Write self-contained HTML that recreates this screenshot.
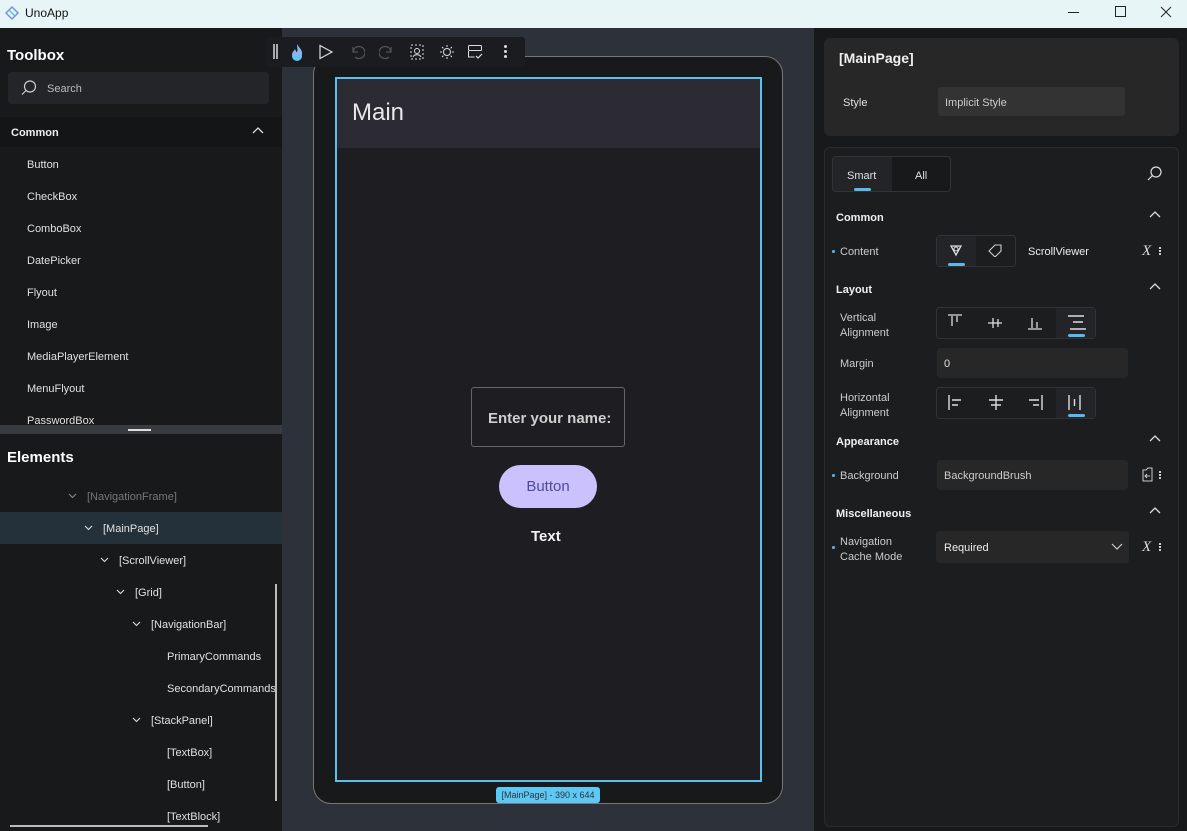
<!DOCTYPE html>
<html><head><meta charset="utf-8"><style>
*{box-sizing:border-box;margin:0;padding:0}
body{width:1187px;height:831px;overflow:hidden;background:#18191b;font-family:"Liberation Sans","DejaVu Sans",sans-serif;color:#e6e6e6;position:relative}
.a{position:absolute}
.t{font-size:11px;color:#e0e0e0;margin-top:1px}
.h{font-weight:bold;font-size:12px;color:#f0f0f0;margin-top:1px}
svg{position:absolute}
.cv{position:absolute;width:9px;height:6px}
</style></head><body>
<!-- title bar -->
<div class="a" style="left:0;top:0;width:1187px;height:28px;background:#e8f5f7"></div>
<svg style="left:3px;top:4px" width="18" height="18" viewBox="0 0 18 18"><path d="M3 9l6-6 6 6-6 6z" fill="none" stroke="#7b8fe0" stroke-width="1.5"/><path d="M6 6l6 6" stroke="#5cc0ee" stroke-width="1.5"/></svg>
<div class="a" style="left:25px;top:6px;font-size:12px;color:#111">UnoApp</div>
<div class="a" style="left:1068px;top:12px;width:11px;height:1px;background:#222"></div>
<div class="a" style="left:1115px;top:6px;width:11px;height:11px;border:1px solid #222"></div>
<svg style="left:1160px;top:6px" width="12" height="12"><path d="M1 1l10 10M11 1L1 11" stroke="#222" stroke-width="1"/></svg>

<!-- left panel -->
<div class="a" style="left:0;top:28px;width:282px;height:803px;background:#18191b"></div>
<div class="a" style="left:7px;top:47px;font-size:15px;font-weight:bold;color:#fff">Toolbox</div>
<div class="a" style="left:8px;top:72px;width:261px;height:32px;background:#242528;border-radius:4px"></div>
<svg style="left:20px;top:79px" width="18" height="18" viewBox="0 0 18 18"><circle cx="10" cy="7.5" r="5.5" fill="none" stroke="#ccc" stroke-width="1.2"/><path d="M6 11.5L2 15.5" stroke="#ccc" stroke-width="1.2"/></svg>
<div class="a t" style="left:47px;top:82px;color:#bbb">Search</div>
<div class="a" style="left:0;top:117px;width:282px;height:30px;background:#141517"></div>
<div class="a h" style="left:11px;top:126px;font-size:11px">Common</div>
<svg style="left:252px;top:126px" width="12" height="10"><path d="M1 7l5-5 5 5" fill="none" stroke="#ddd" stroke-width="1.3"/></svg>
<div class="a t" style="left:27px;top:158px">Button</div>
<div class="a t" style="left:27px;top:190px">CheckBox</div>
<div class="a t" style="left:27px;top:222px">ComboBox</div>
<div class="a t" style="left:27px;top:254px">DatePicker</div>
<div class="a t" style="left:27px;top:286px">Flyout</div>
<div class="a t" style="left:27px;top:318px">Image</div>
<div class="a t" style="left:27px;top:350px">MediaPlayerElement</div>
<div class="a t" style="left:27px;top:382px">MenuFlyout</div>
<div class="a t" style="left:27px;top:414px">PasswordBox</div>
<div class="a" style="left:0;top:425px;width:282px;height:9px;background:#383c40"></div>
<div class="a" style="left:128px;top:429px;width:23px;height:2px;background:#ddd"></div>
<div class="a" style="left:7px;top:449px;font-size:15px;font-weight:bold;color:#fff">Elements</div>
<div class="a" style="left:0;top:512px;width:282px;height:32px;background:#25313a"></div>
<svg class="cv" style="left:68px;top:493px" viewBox="0 0 9 6"><path d="M1 1l3.5 3.5L8 1" fill="none" stroke="#888" stroke-width="1.1"/></svg>
<div class="a t" style="left:87px;top:490px;color:#777">[NavigationFrame]</div>
<svg class="cv" style="left:84px;top:525px" viewBox="0 0 9 6"><path d="M1 1l3.5 3.5L8 1" fill="none" stroke="#ddd" stroke-width="1.1"/></svg>
<div class="a t" style="left:103px;top:522px">[MainPage]</div>
<svg class="cv" style="left:100px;top:557px" viewBox="0 0 9 6"><path d="M1 1l3.5 3.5L8 1" fill="none" stroke="#ddd" stroke-width="1.1"/></svg>
<div class="a t" style="left:119px;top:554px">[ScrollViewer]</div>
<svg class="cv" style="left:116px;top:589px" viewBox="0 0 9 6"><path d="M1 1l3.5 3.5L8 1" fill="none" stroke="#ddd" stroke-width="1.1"/></svg>
<div class="a t" style="left:135px;top:586px">[Grid]</div>
<svg class="cv" style="left:132px;top:621px" viewBox="0 0 9 6"><path d="M1 1l3.5 3.5L8 1" fill="none" stroke="#ddd" stroke-width="1.1"/></svg>
<div class="a t" style="left:151px;top:618px">[NavigationBar]</div>
<div class="a t" style="left:167px;top:650px">PrimaryCommands</div>
<div class="a t" style="left:167px;top:682px">SecondaryCommands</div>
<svg class="cv" style="left:132px;top:717px" viewBox="0 0 9 6"><path d="M1 1l3.5 3.5L8 1" fill="none" stroke="#ddd" stroke-width="1.1"/></svg>
<div class="a t" style="left:151px;top:714px">[StackPanel]</div>
<div class="a t" style="left:167px;top:746px">[TextBox]</div>
<div class="a t" style="left:167px;top:778px">[Button]</div>
<div class="a t" style="left:167px;top:810px">[TextBlock]</div>
<div class="a" style="left:275px;top:584px;width:2px;height:217px;background:#bbb"></div>
<div class="a" style="left:10px;top:825px;width:198px;height:2px;background:#bbb"></div>

<!-- canvas -->
<div class="a" style="left:282px;top:28px;width:532px;height:803px;background:#2d3139"></div>
<div class="a" style="left:313px;top:56px;width:470px;height:748px;background:#18191b;border:1px solid #777;border-radius:18px"></div>
<div class="a" style="left:335px;top:77px;width:427px;height:705px;background:#1e1d22;border:2px solid #5bc0f0"></div>
<div class="a" style="left:337px;top:79px;width:423px;height:69px;background:#2c2a33"></div>
<div class="a" style="left:352px;top:99px;font-size:24px;color:#e8e8e8">Main</div>
<div class="a" style="left:471px;top:387px;width:154px;height:60px;border:1px solid #666;border-radius:3px"></div>
<div class="a" style="left:488px;top:410px;font-size:15px;font-weight:bold;color:#cfcfcf">Enter your name:</div>
<div class="a" style="left:499px;top:465px;width:98px;height:43px;background:#cbc1fc;border-radius:22px;text-align:center;line-height:44px;font-size:15px;color:#4e4ba0">Button</div>
<div class="a" style="left:531px;top:528px;font-size:15px;font-weight:bold;color:#f2f2f2">Text</div>
<div class="a" style="left:496px;top:787px;width:104px;height:16px;background:#5bc8f5;border-radius:3px;font-size:9px;color:#333;text-align:center;line-height:16px">[MainPage] - 390 x 644</div>
<!-- toolbar -->
<div class="a" style="left:266px;top:37px;width:259px;height:30px;background:#1b1c1f;border-radius:3px"></div>
<div class="a" style="left:273px;top:44px;width:1.5px;height:15px;background:#aaa"></div><div class="a" style="left:276px;top:44px;width:1.5px;height:15px;background:#aaa"></div>
<svg style="left:288px;top:42px" width="18" height="20"><path d="M9 2c2 4 6 6 5 11a5 5 0 0 1-10 0c0-3 2-4 3-6 1 2 1 3 2 3 1-2 0-5 0-8z" fill="#8ab6f0"/><path d="M4 14a5 5 0 0 0 10 0" fill="#5ec6f2"/></svg>
<svg style="left:318px;top:44px" width="16" height="16"><path d="M2 1.5l12 6.5-12 6.5z" fill="none" stroke="#ddd" stroke-width="1.2"/></svg>
<svg style="left:349px;top:44px" width="16" height="16"><path d="M4 3v5h5M4 8a6 6 0 1 1 2 5" fill="none" stroke="#555" stroke-width="1.2"/></svg>
<svg style="left:379px;top:44px" width="16" height="16"><path d="M12 3v5H7M12 8a6 6 0 1 0-2 5" fill="none" stroke="#555" stroke-width="1.2"/></svg>
<svg style="left:409px;top:44px" width="16" height="16"><rect x="2" y="1" width="12" height="14" fill="none" stroke="#ddd" stroke-dasharray="2 2"/><circle cx="8" cy="7" r="2.5" fill="none" stroke="#ddd"/><path d="M4 13c1-3 7-3 8 0" fill="none" stroke="#ddd"/></svg>
<svg style="left:439px;top:44px" width="16" height="16"><circle cx="8" cy="8" r="3.5" fill="none" stroke="#ddd"/><path d="M8 1v2M8 13v2M1 8h2M13 8h2M3 3l1.4 1.4M11.6 11.6L13 13M3 13l1.4-1.4M11.6 4.4L13 3" stroke="#ddd"/></svg>
<svg style="left:467px;top:44px" width="18" height="16"><rect x="1.5" y="1.5" width="13" height="5" rx="1" fill="none" stroke="#ddd"/><path d="M1.5 7v6h6" fill="none" stroke="#ddd"/><path d="M9 12l2 2 4-4" fill="none" stroke="#ddd" stroke-width="1.2"/></svg>
<div class="a" style="left:504px;top:45px;width:3px;height:3px;background:#ddd;border-radius:2px;box-shadow:0 5px 0 #ddd,0 10px 0 #ddd"></div>

<!-- right panel -->
<div class="a" style="left:824px;top:38px;width:355px;height:98px;background:#272727;border-radius:6px"></div>
<div class="a h" style="left:839px;top:49px;font-size:14px">[MainPage]</div>
<div class="a t" style="left:843px;top:96px">Style</div>
<div class="a" style="left:938px;top:87px;width:187px;height:29px;background:#333;border-radius:3px"></div>
<div class="a t" style="left:945px;top:96px;color:#ccc">Implicit Style</div>
<div class="a" style="left:824px;top:147px;width:355px;height:680px;background:#1c1d1f;border:1px solid #2a2b2d;border-radius:6px"></div>
<div class="a" style="left:832px;top:156px;width:119px;height:36px;border:1px solid #333;border-radius:4px;background:#18191b"></div>
<div class="a" style="left:833px;top:157px;width:59px;height:34px;background:#232427;border-radius:3px 0 0 3px"></div>
<div class="a t" style="left:847px;top:169px">Smart</div>
<div class="a t" style="left:915px;top:169px">All</div>
<div class="a" style="left:854px;top:188px;width:17px;height:3px;background:#5bb8ea;border-radius:2px"></div>
<svg style="left:1145px;top:165px" width="18" height="18"><circle cx="11" cy="7" r="5" fill="none" stroke="#ddd" stroke-width="1.2"/><path d="M7.5 10.5L3 15" stroke="#ddd" stroke-width="1.2"/></svg>

<div class="a h" style="left:836px;top:211px;font-size:11px">Common</div>
<svg style="left:1149px;top:210px" width="12" height="9"><path d="M1 7l5-5 5 5" fill="none" stroke="#ddd" stroke-width="1.3"/></svg>
<div class="a" style="left:832px;top:250px;width:3px;height:3px;background:#5bb8ea;border-radius:2px"></div>
<div class="a t" style="left:840px;top:245px;color:#ccc">Content</div>
<div class="a" style="left:936px;top:235px;width:80px;height:32px;border:1px solid #333;border-radius:4px"></div>
<div class="a" style="left:937px;top:236px;width:39px;height:30px;background:#232427"></div>
<svg style="left:948px;top:243px" width="16" height="14"><path d="M3 3h10l-5 9z" fill="none" stroke="#ddd" stroke-width="1.3"/><circle cx="8" cy="6" r="2" fill="none" stroke="#ddd"/></svg>
<div class="a" style="left:948px;top:263px;width:17px;height:3px;background:#5bb8ea;border-radius:2px"></div>
<svg style="left:987px;top:243px" width="16" height="14"><path d="M2 8l6-6h6v6l-6 6z" fill="none" stroke="#ccc" stroke-width="1.1"/></svg>
<div class="a t" style="left:1028px;top:245px;color:#eee">ScrollViewer</div>
<div class="a" style="left:1142px;top:243px;font-family:'Liberation Serif',serif;font-style:italic;font-size:15px;color:#ddd">X</div>
<div class="a" style="left:1159px;top:247px;width:2px;height:2px;background:#ccc;box-shadow:0 3px 0 #ccc,0 6px 0 #ccc"></div>

<div class="a h" style="left:836px;top:283px;font-size:11px">Layout</div>
<svg style="left:1149px;top:282px" width="12" height="9"><path d="M1 7l5-5 5 5" fill="none" stroke="#ddd" stroke-width="1.3"/></svg>
<div class="a t" style="left:840px;top:310px;color:#ccc;line-height:15px">Vertical<br>Alignment</div>
<div class="a" style="left:936px;top:307px;width:160px;height:32px;border:1px solid #333;border-radius:4px"></div>
<div class="a" style="left:1056px;top:308px;width:39px;height:30px;background:#232427"></div>
<svg style="left:946px;top:313px" width="140" height="20"><g stroke="#ddd" stroke-width="1.3" fill="none"><path d="M2 2h14M6 3v10M11 3v6"/><path d="M42 10h14M47 5v10M52 6v8"/><path d="M82 16h14M86 5v10M91 9v6"/><path d="M122 3h16M124 16h16M127 9h10" stroke-width="1.5"/></g></svg>
<div class="a" style="left:1068px;top:334px;width:17px;height:3px;background:#5bb8ea;border-radius:2px"></div>
<div class="a t" style="left:840px;top:357px;color:#ccc">Margin</div>
<div class="a" style="left:937px;top:348px;width:191px;height:30px;background:#272727;border-radius:3px"></div>
<div class="a t" style="left:944px;top:357px">0</div>
<div class="a t" style="left:840px;top:390px;color:#ccc;line-height:15px">Horizontal<br>Alignment</div>
<div class="a" style="left:936px;top:387px;width:160px;height:32px;border:1px solid #333;border-radius:4px"></div>
<div class="a" style="left:1056px;top:388px;width:39px;height:30px;background:#232427"></div>
<svg style="left:946px;top:393px" width="140" height="20"><g stroke="#ddd" stroke-width="1.4" fill="none"><path d="M3 2v15M6 7h9M6 12h6"/><path d="M50 2v15M43 7h14M45 12h10"/><path d="M96 2v15M83 7h10M87 12h6"/><path d="M123 2v15M134 2v15M128.5 6v7"/></g></svg>
<div class="a" style="left:1068px;top:414px;width:17px;height:3px;background:#5bb8ea;border-radius:2px"></div>

<div class="a h" style="left:836px;top:435px;font-size:11px">Appearance</div>
<svg style="left:1149px;top:434px" width="12" height="9"><path d="M1 7l5-5 5 5" fill="none" stroke="#ddd" stroke-width="1.3"/></svg>
<div class="a" style="left:832px;top:474px;width:3px;height:3px;background:#5bb8ea;border-radius:2px"></div>
<div class="a t" style="left:840px;top:469px;color:#ccc">Background</div>
<div class="a" style="left:937px;top:460px;width:191px;height:30px;background:#272727;border-radius:3px"></div>
<div class="a t" style="left:944px;top:469px;color:#ccc">BackgroundBrush</div>
<svg style="left:1142px;top:467px" width="12" height="15"><path d="M1 3h3l2-2h4v13H1z" fill="none" stroke="#ccc"/><path d="M8 9H3M5 7L3 9l2 2" fill="none" stroke="#ccc"/></svg>
<div class="a" style="left:1159px;top:471px;width:2px;height:2px;background:#ccc;box-shadow:0 3px 0 #ccc,0 6px 0 #ccc"></div>

<div class="a h" style="left:836px;top:507px;font-size:11px">Miscellaneous</div>
<svg style="left:1149px;top:506px" width="12" height="9"><path d="M1 7l5-5 5 5" fill="none" stroke="#ddd" stroke-width="1.3"/></svg>
<div class="a" style="left:832px;top:546px;width:3px;height:3px;background:#5bb8ea;border-radius:2px"></div>
<div class="a t" style="left:840px;top:534px;color:#ccc;line-height:15px">Navigation<br>Cache Mode</div>
<div class="a" style="left:936px;top:531px;width:193px;height:32px;background:#272727;border-radius:3px"></div>
<div class="a t" style="left:944px;top:541px;color:#eee">Required</div>
<svg style="left:1111px;top:542px" width="12" height="9"><path d="M1 2l5 5 5-5" fill="none" stroke="#ccc" stroke-width="1.2"/></svg>
<div class="a" style="left:1142px;top:539px;font-family:'Liberation Serif',serif;font-style:italic;font-size:15px;color:#ddd">X</div>
<div class="a" style="left:1159px;top:543px;width:2px;height:2px;background:#ccc;box-shadow:0 3px 0 #ccc,0 6px 0 #ccc"></div>
</body></html>
